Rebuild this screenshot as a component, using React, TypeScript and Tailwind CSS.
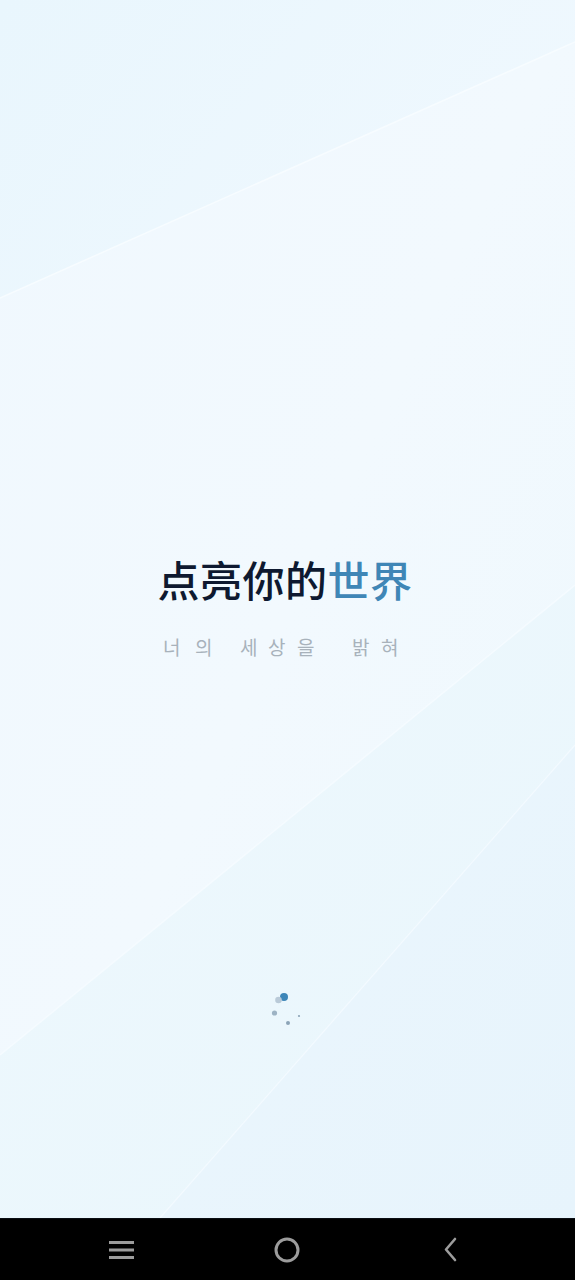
import React from "react";

function Background() {
  return (
    <svg
      className="absolute inset-0 w-full h-full"
      viewBox="0 0 575 1218"
      preserveAspectRatio="none"
    >
      <defs>
        <linearGradient id="g0" x1="0" y1="0" x2="1" y2="1">
          <stop offset="0" stopColor="#f0f8fe" />
          <stop offset="0.5" stopColor="#f2f9fe" />
          <stop offset="1" stopColor="#eef8fd" />
        </linearGradient>
        <linearGradient id="g1" x1="0" y1="0" x2="1" y2="0.4">
          <stop offset="0" stopColor="#e9f6fd" />
          <stop offset="1" stopColor="#eff8fe" />
        </linearGradient>
        <linearGradient id="g2" x1="0" y1="0" x2="1" y2="1">
          <stop offset="0" stopColor="#eef8fd" />
          <stop offset="1" stopColor="#e9f6fc" />
        </linearGradient>
        <linearGradient id="g3" x1="0" y1="0" x2="1" y2="1">
          <stop offset="0" stopColor="#ebf6fd" />
          <stop offset="1" stopColor="#e7f4fc" />
        </linearGradient>
      </defs>
      <rect x="0" y="0" width="575" height="1218" fill="url(#g0)" />
      <polygon points="0,0 575,0 575,42 0,298" fill="url(#g1)" />
      <polygon points="575,585 575,1218 0,1218 0,1055" fill="url(#g2)" />
      <polygon points="575,745 575,1218 160,1218" fill="url(#g3)" />
      <line x1="0" y1="298" x2="575" y2="42" stroke="#f7fcff" strokeWidth="1.5" />
      <line x1="0" y1="1055" x2="575" y2="585" stroke="#f5fbff" strokeWidth="1.5" />
      <line x1="575" y1="745" x2="160" y2="1218" stroke="#f3faff" strokeWidth="1.2" />
    </svg>
  );
}

function Spinner() {
  return (
    <svg width="40" height="40" viewBox="0 0 40 40">
      <circle cx="14" cy="9" r="4" fill="#3d86b8" />
      <circle cx="8.5" cy="12" r="3.3" fill="#b9cad8" />
      <circle cx="4.5" cy="25" r="2.6" fill="#9db3c4" />
      <circle cx="18" cy="35" r="2" fill="#8ca4b7" />
      <circle cx="29" cy="28" r="1.1" fill="#8ca4b7" />
    </svg>
  );
}

export default function App() {
  return (
    <div
      className="w-[575px] h-[1280px] flex flex-col overflow-hidden"
      style={{ fontFamily: '"Noto Sans CJK SC", "Noto Sans CJK KR", sans-serif' }}
    >
      <div className="relative h-[1218px] flex flex-col items-center">
        <Background />
        <div className="relative flex flex-col items-center pt-[558px]">
          <div className="text-[42px] leading-none font-medium tracking-[0.5px] mr-[5px] whitespace-nowrap">
            <span className="text-[#0e1930]">点亮你的</span>
            <span className="text-[#3f86b6]">世界</span>
          </div>
          <div
            className="mt-[37px] flex text-[19px] leading-none text-[#a8b2bb] whitespace-nowrap mr-[12px]"
            style={{ fontFamily: '"Noto Sans CJK KR", sans-serif' }}
          >
            <span className="w-[19px]">너</span>
            <span className="w-[19px] ml-[13px]">의</span>
            <span className="w-[19px] ml-[26px]">세</span>
            <span className="w-[19px] ml-[9px]">상</span>
            <span className="w-[19px] ml-[10px]">을</span>
            <span className="w-[19px] ml-[36px]">밝</span>
            <span className="w-[19px] ml-[10px]">혀</span>
          </div>
          <div className="mt-[332px] ml-[4px]">
            <Spinner />
          </div>
        </div>
      </div>
      <div className="h-[62px] bg-black border-t border-[#0b0f14] flex items-center px-[108px]">
        <svg width="28" height="24" viewBox="0 0 28 24">
          <rect x="1" y="3" width="25" height="3" fill="#9c9c9c" />
          <rect x="1" y="10.5" width="25" height="3" fill="#9c9c9c" />
          <rect x="1" y="18" width="25" height="3" fill="#9c9c9c" />
        </svg>
        <svg width="28" height="28" viewBox="0 0 28 28" className="ml-[137px]">
          <circle cx="14" cy="14" r="11" fill="none" stroke="#9c9c9c" strokeWidth="3" />
        </svg>
        <svg width="20" height="28" viewBox="0 0 20 28" className="ml-[140px]">
          <polyline points="14,3 5,13.5 14,24" fill="none" stroke="#9c9c9c" strokeWidth="2.6" strokeLinecap="round" strokeLinejoin="round" />
        </svg>
      </div>
    </div>
  );
}
